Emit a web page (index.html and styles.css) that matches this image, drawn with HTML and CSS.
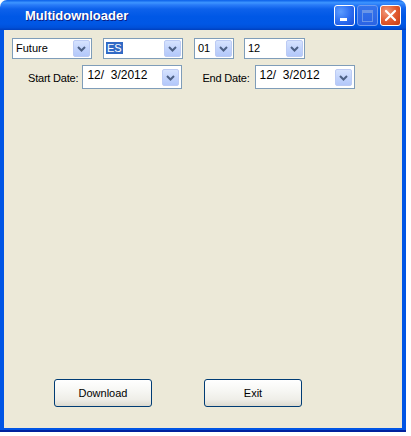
FILE: index.html
```html
<!DOCTYPE html>
<html lang="en">
<head>
  <meta charset="UTF-8" />
  <title>Multidownloader</title>
  <link rel="stylesheet" href="styles.css">
</head>
<body>

  <div class="window">
    <!-- Title bar -->
    <div class="titlebar">
      <span class="title">Multidownloader</span>
      <div class="caption-btns">
        <div class="cap-btn min"><span class="min-bar"></span></div>
        <div class="cap-btn max disabled"><span class="max-box"></span></div>
        <div class="cap-btn close">
          <svg width="13" height="13" viewBox="0 0 13 13">
            <path d="M2 2 L11 11 M11 2 L2 11" stroke="#fff" stroke-width="2.2" stroke-linecap="round"/>
          </svg>
        </div>
      </div>
    </div>

    <div class="client">
      <div class="row row-combos">
        <div class="combo w-future"><span class="combo-text">Future</span><span class="drop"></span></div>
        <div class="combo w-es"><span class="combo-text"><span class="selected">ES</span></span><span class="drop"></span></div>
        <div class="combo w-month"><span class="combo-text">01</span><span class="drop"></span></div>
        <div class="combo w-year"><span class="combo-text">12</span><span class="drop"></span></div>
      </div>

      <div class="row row-dates">
        <label class="lbl start-lbl">Start Date:</label>
        <div class="datepick"><span class="date-text">12/&nbsp; 3/2012</span><span class="drop"></span></div>
        <label class="lbl end-lbl">End Date:</label>
        <div class="datepick"><span class="date-text">12/&nbsp; 3/2012</span><span class="drop"></span></div>
      </div>

      <div class="row row-buttons">
        <button class="xp-btn download-btn">Download</button>
        <button class="xp-btn exit-btn">Exit</button>
      </div>
    </div>
  </div>

</body>
</html>
```

FILE: styles.css
```css
body {
  margin: 0;
  padding: 0;
  background: #fff;
  font-family: 'Liberation Sans', Arial, sans-serif;
  font-size: 11px;
  color: #000;
}

.window {
  width: 406px;
  height: 432px;
  display: flex;
  flex-direction: column;
}

/* XP blue title bar */
.titlebar {
  height: 30px;
  border-radius: 7px 7px 0 0;
  background: linear-gradient(to bottom, #0a5fe9 0%, #3d95ff 9%, #2a7cf8 16%, #0d61eb 30%, #0058e6 55%, #0057e5 80%, #0050d9 92%, #003fbd 100%);
  display: flex;
  align-items: center;
  justify-content: space-between;
  padding: 0 5px 0 25px;
  box-sizing: border-box;
}

.title {
  color: #fff;
  font-family: 'Liberation Sans', Arial, sans-serif;
  font-weight: bold;
  font-size: 13px;
  text-shadow: 1px 1px 0 #0a1e85;
  margin-top: 1px;
}

.caption-btns {
  display: flex;
  gap: 2px;
  margin-top: 1px;
}

.cap-btn {
  width: 21px;
  height: 21px;
  box-sizing: border-box;
  border: 1px solid #fff;
  border-radius: 3px;
  background: radial-gradient(circle at 30% 30%, #5c9cff 0%, #2b6cf0 55%, #1b4fd8 100%);
  display: flex;
  align-items: center;
  justify-content: center;
  position: relative;
}

.cap-btn.disabled {
  border-color: #6f9cf0;
  background: linear-gradient(to bottom, #3574ec, #2a63e4);
}

.min-bar {
  position: absolute;
  left: 5px;
  bottom: 4px;
  width: 7px;
  height: 3px;
  background: #fff;
}

.max-box {
  width: 9px;
  height: 8px;
  border: 1px solid #6a95e8;
  border-top-width: 3px;
}

.cap-btn.close {
  background: radial-gradient(circle at 30% 30%, #f19a7d 0%, #e25b30 50%, #c53b12 100%);
}

/* client area */
.client {
  flex: 1;
  background: #ece9d8;
  border: 4px solid #0055e5;
  border-top: none;
  display: flex;
  flex-direction: column;
  padding: 8px 0 21px 8px;
  box-sizing: border-box;
  position: relative;
}

.client::after {
  content: "";
  position: absolute;
  left: -4px;
  right: -4px;
  bottom: -4px;
  height: 2px;
  background: #00229e;
}

.row {
  display: flex;
  align-items: center;
}

.combo {
  height: 21px;
  box-sizing: border-box;
  border: 1px solid #7f9db9;
  background: #fff;
  display: flex;
  align-items: center;
  justify-content: space-between;
  padding: 0 1px 0 3px;
  margin-right: 11px;
}

.w-future { width: 80px; }
.w-es { width: 80px; }
.w-month { width: 40px; margin-right: 10px; }
.w-year { width: 61px; }

.combo-text, .date-text {
  line-height: 15px;
}

.selected {
  background: #316ac5;
  color: #fff;
  padding: 0 1px;
  margin-left: -1px;
}

.drop {
  width: 17px;
  height: 17px;
  box-sizing: border-box;
  border: 1px solid #bccbf4;
  border-radius: 2px;
  background-image: url("data:image/svg+xml,%3Csvg xmlns='http://www.w3.org/2000/svg' width='15' height='15'%3E%3Cpath d='M4 6 L7.5 9.5 L11 6' fill='none' stroke='%234d6185' stroke-width='2'/%3E%3C/svg%3E"), linear-gradient(to bottom, #d6e3fe 0%, #c3d4fc 50%, #b3c8fa 100%);
  background-repeat: no-repeat;
}

.row-dates {
  margin-top: 6px;
}

.lbl {
  margin-top: 2px;
  letter-spacing: -0.2px;
}

.start-lbl {
  margin-left: 16px;
  margin-right: 4px;
}

.end-lbl {
  margin-left: 20px;
  margin-right: 5px;
}

.datepick {
  width: 100px;
  height: 24px;
  box-sizing: border-box;
  border: 1px solid #7f9db9;
  background: #fff;
  display: flex;
  align-items: center;
  justify-content: space-between;
  padding: 0 2px 0 4px;
  font-size: 12px;
}

.datepick .date-text {
  align-self: flex-start;
  margin-top: 2px;
}

.row-buttons {
  margin-top: auto;
  padding-left: 42px;
}

.xp-btn {
  width: 98px;
  height: 28px;
  border: 1px solid #003c74;
  border-radius: 3px;
  background: linear-gradient(to bottom, #ffffff 0%, #f7f7f4 40%, #efeee8 75%, #dcdad0 100%);
  font-family: 'Liberation Sans', Arial, sans-serif;
  font-size: 11px;
  color: #000;
  padding: 0;
  cursor: pointer;
}

.exit-btn {
  margin-left: 52px;
}
```
